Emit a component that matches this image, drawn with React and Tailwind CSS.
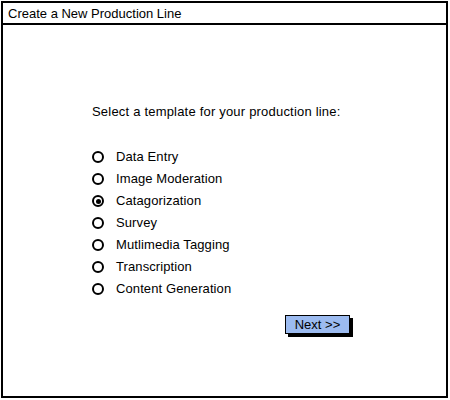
import { useState } from "react";

const templates = [
  "Data Entry",
  "Image Moderation",
  "Catagorization",
  "Survey",
  "Mutlimedia Tagging",
  "Transcription",
  "Content Generation",
];

const App = () => {
  const [selected, setSelected] = useState("Catagorization");

  return (
    <div
      className="w-[450px] h-[400px] bg-white pt-[1px] pl-[1px] text-black"
      style={{ fontFamily: '"Liberation Sans", Arial, sans-serif' }}
    >
      <div className="w-[447px] h-[397px] border-2 border-black flex flex-col">
        {/* title bar */}
        <div className="h-[22px] border-b-2 border-black flex items-center pl-[5px] text-[13px] leading-none">
          Create a New Production Line
        </div>

        {/* body */}
        <div className="flex flex-col pl-[89px] pt-[79px]">
          <p className="text-[13px] leading-[16px] tracking-[0.2px]">
            Select a template for your production line:
          </p>

          <div className="flex flex-col mt-[26px]">
            {templates.map((t) => (
              <label
                key={t}
                onClick={() => setSelected(t)}
                className="h-[22px] flex items-center gap-[12px] text-[13px] tracking-[0.1px] cursor-pointer"
              >
                <span className="w-[12px] h-[12px] rounded-full border-[2.5px] border-black flex items-center justify-center">
                  {selected === t && (
                    <span className="w-[5px] h-[5px] rounded-full bg-black" />
                  )}
                </span>
                {t}
              </label>
            ))}
          </div>

          <div className="mt-[15px] pl-[193px]">
            <button className="w-[65px] h-[19px] bg-[#9cbbf0] border border-black shadow-[3px_3px_0_#000] text-[13px] leading-none flex items-center justify-center">
              Next &gt;&gt;
            </button>
          </div>
        </div>
      </div>
    </div>
  );
};

export default App;
